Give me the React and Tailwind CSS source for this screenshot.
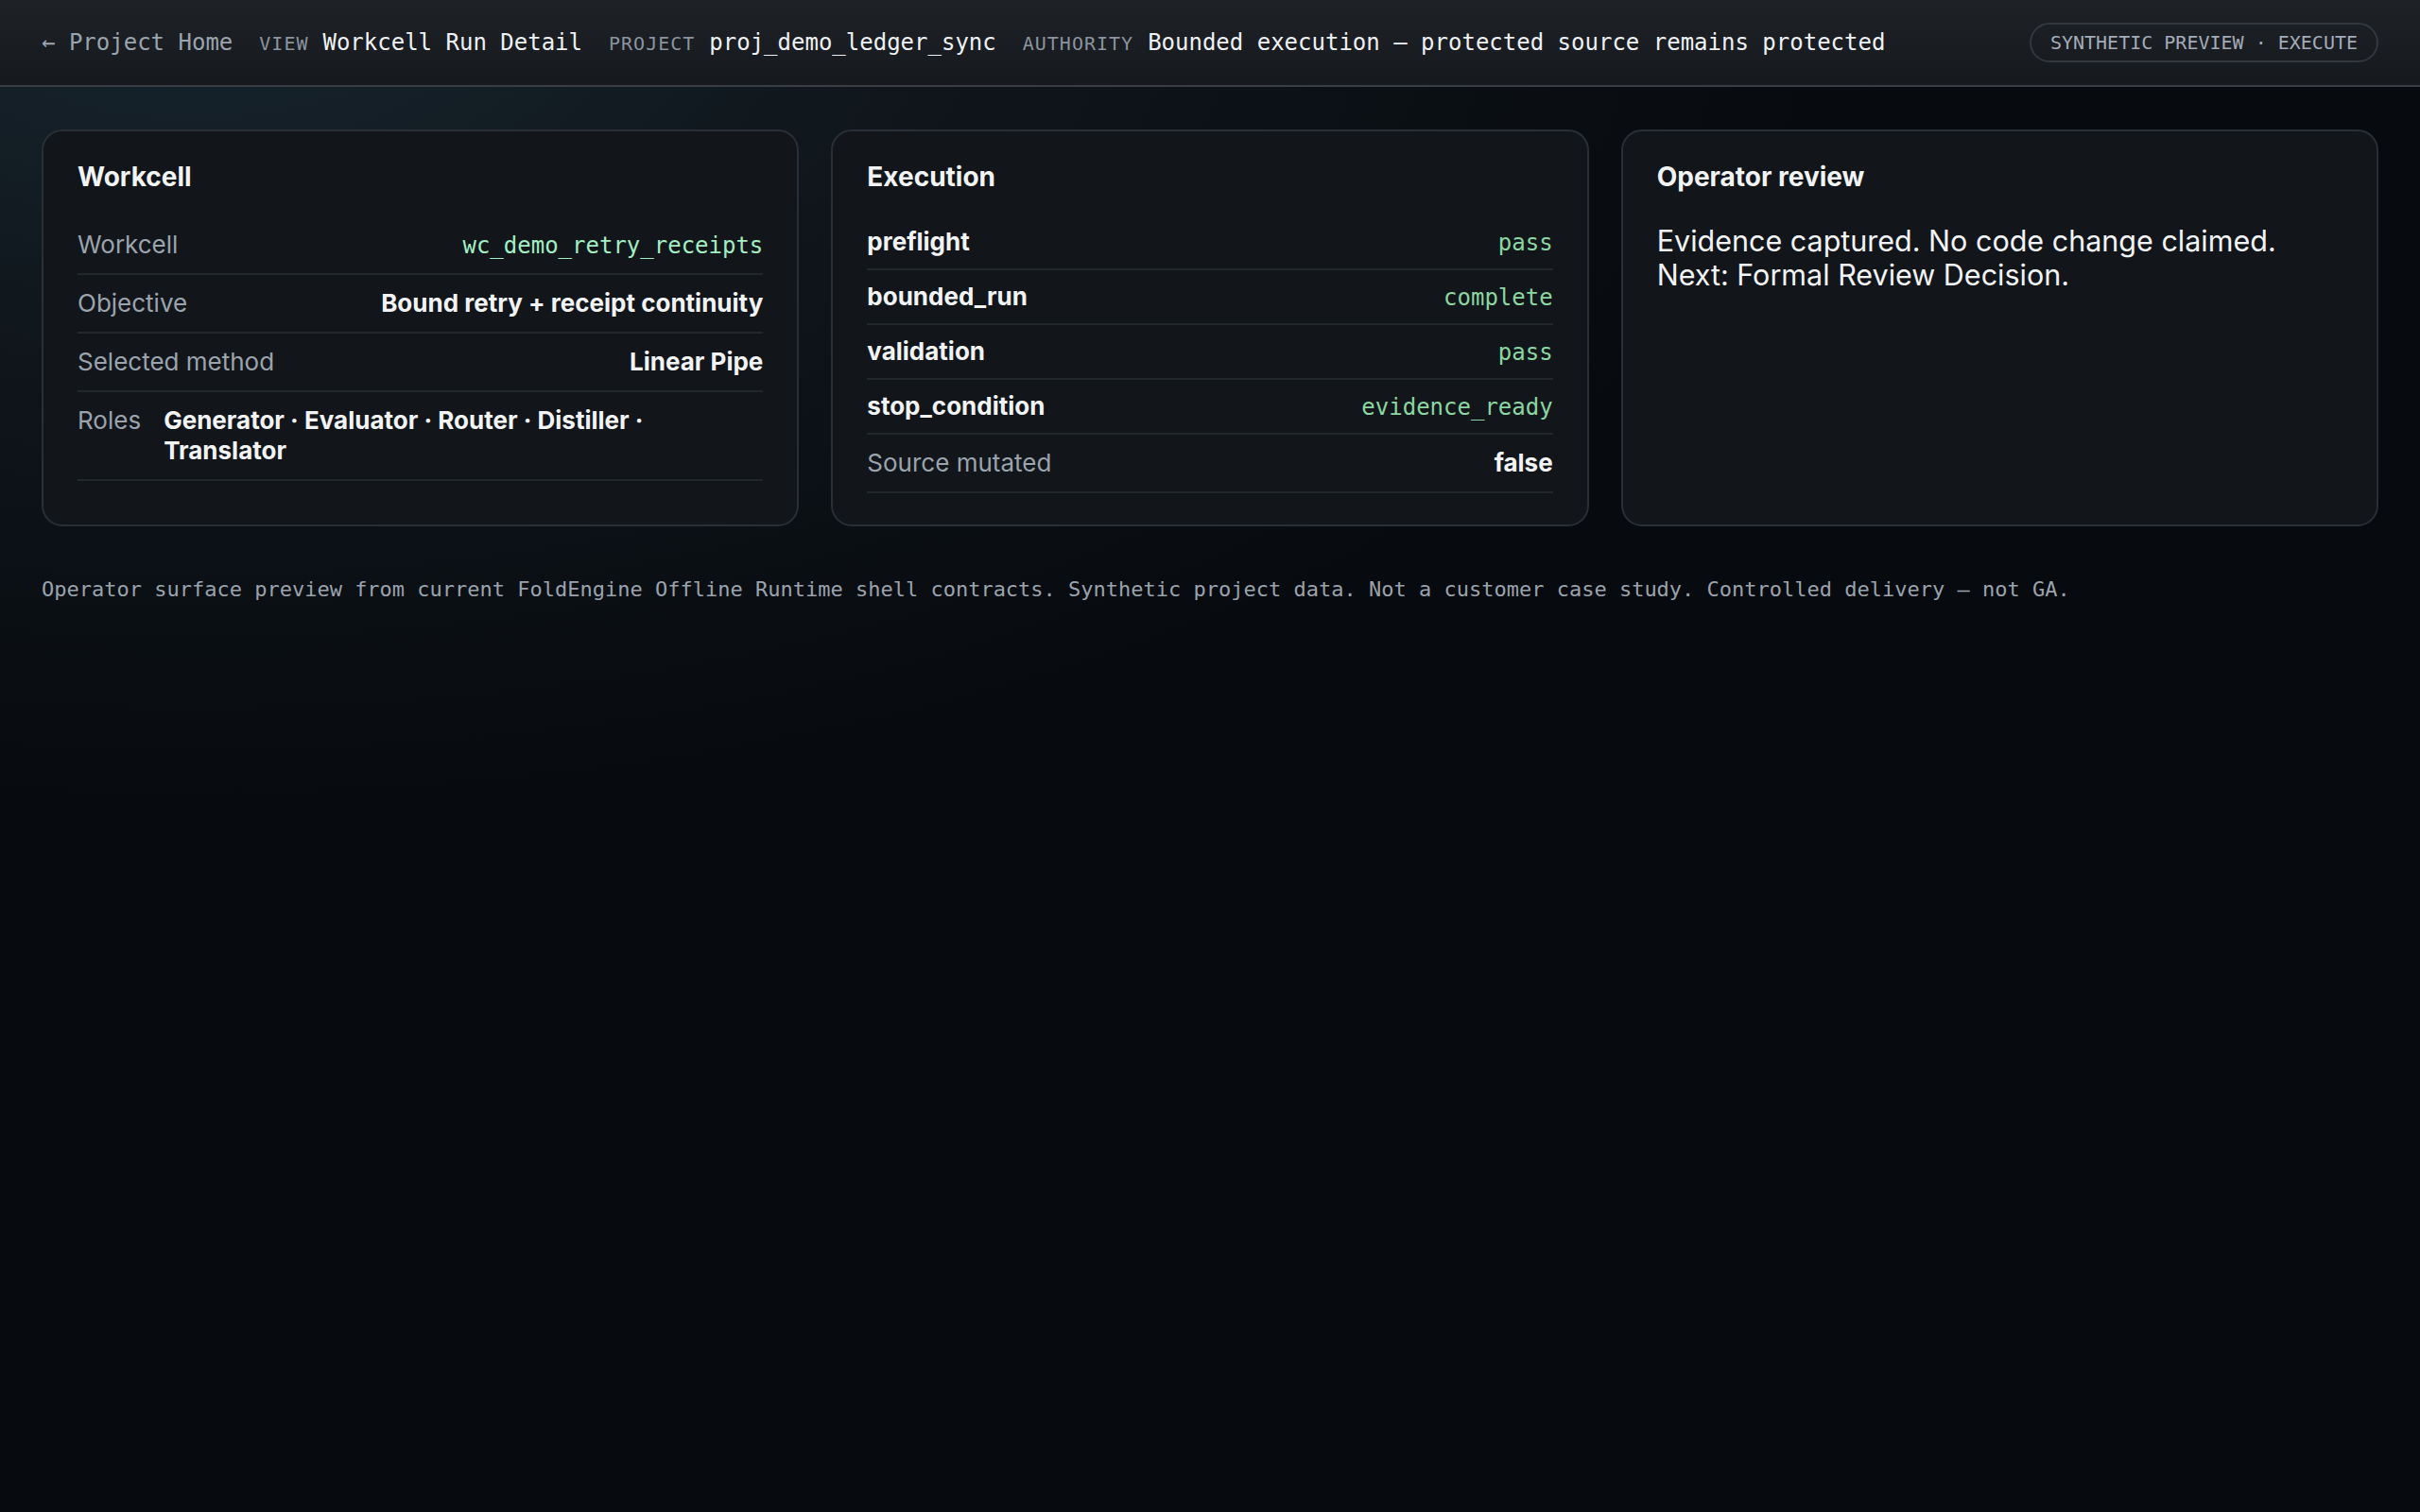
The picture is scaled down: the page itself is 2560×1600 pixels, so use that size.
import React from 'react'

const workcellRows = [
    { label: 'Workcell', value: 'wc_demo_retry_receipts', mono: true },
    { label: 'Objective', value: 'Bound retry + receipt continuity' },
    { label: 'Selected method', value: 'Linear Pipe' },
    { label: 'Roles', value: 'Generator · Evaluator · Router · Distiller · Translator' },
]

const steps = [
    { name: 'preflight', status: 'pass' },
    { name: 'bounded_run', status: 'complete' },
    { name: 'validation', status: 'pass' },
    { name: 'stop_condition', status: 'evidence_ready' },
]

const mono = "font-['DejaVu_Sans_Mono',monospace]"

const Card = ({ title, children }) => (
    <section className="rounded-[22px] border-2 border-[#2a2f35] bg-[#12161b] px-[36px] pt-[28px] pb-[33px]">
        <h2 className="text-[28px] leading-[40px] font-bold text-[#f1f3f5]">{title}</h2>
        {children}
    </section>
)

const Row = ({ label, value, valueMono }) => (
    <div className="flex items-baseline justify-between gap-[24px] border-b-2 border-[#22272c] py-[14px] text-[26px] leading-[32px]">
        <span className="shrink-0 text-[#9ba3ad]">{label}</span>
        {valueMono ? (
            <span className={`${mono} text-[24px] leading-[20px] text-[#a3eec4]`}>{value}</span>
        ) : (
            <span className="font-bold text-[#f1f3f5]">{value}</span>
        )}
    </div>
)

export default function App() {
    return (
        <div className="min-h-screen bg-[#070a0e] bg-[radial-gradient(ellipse_70%_55%_at_8%_0%,#17252e_0%,#0f151b_45%,#070a0e_100%)] font-['Inter',sans-serif]">
            {/* Top bar */}
            <header className={`${mono} flex h-[92px] items-center justify-between border-b-2 border-[#3a3e44] bg-[linear-gradient(180deg,#1e2227,#16191d)] px-[44px]`}>
                <div className="flex items-baseline gap-[28px] whitespace-nowrap">
                    <span className="text-[24px] text-[#9aa4af]">← Project Home</span>
                    <span className="flex items-baseline gap-[15px]">
                        <span className="text-[20px] tracking-[0.05em] text-[#8b949f]">VIEW</span>
                        <span className="text-[24px] text-[#eef1f4]">Workcell Run Detail</span>
                    </span>
                    <span className="flex items-baseline gap-[15px]">
                        <span className="text-[20px] tracking-[0.05em] text-[#8b949f]">PROJECT</span>
                        <span className="text-[24px] text-[#eef1f4]">proj_demo_ledger_sync</span>
                    </span>
                    <span className="flex items-baseline gap-[15px]">
                        <span className="text-[20px] tracking-[0.05em] text-[#8b949f]">AUTHORITY</span>
                        <span className="text-[24px] text-[#eef1f4]">Bounded execution — protected source remains protected</span>
                    </span>
                </div>
                <span className="rounded-full border-2 border-[#33383e] px-[20px] py-[6px] text-[20px] leading-[26px] text-[#a3acb8]">
                    SYNTHETIC PREVIEW · EXECUTE
                </span>
            </header>

            <main className="px-[44px] pt-[45px]">
                <div className="grid grid-cols-3 gap-[34px]">
                    <Card title="Workcell">
                        <div className="mt-[22px]">
                            {workcellRows.map(r => (
                                <Row key={r.label} label={r.label} value={r.value} valueMono={r.mono} />
                            ))}
                        </div>
                    </Card>

                    <Card title="Execution">
                        <div className="mt-[21px]">
                            {steps.map(s => (
                                <div key={s.name} className="flex items-baseline justify-between border-b-2 border-[#22272c] py-[12px] text-[26px] leading-[32px]">
                                    <span className="font-bold text-[#f1f3f5]">{s.name}</span>
                                    <span className={`${mono} text-[24px] leading-[20px] text-[#8bd6a2]`}>{s.status}</span>
                                </div>
                            ))}
                            <Row label="Source mutated" value="false" />
                        </div>
                    </Card>

                    <Card title="Operator review">
                        <div className="mt-[30px] text-[30.5px] leading-[36px] text-[#f1f3f5]">
                            <p>Evidence captured. No code change claimed.</p>
                            <p>Next: Formal Review Decision.</p>
                        </div>
                    </Card>
                </div>

                <p className={`${mono} mt-[50px] text-[22px] leading-[33px] text-[#9aa3ad]`}>
                    Operator surface preview from current FoldEngine Offline Runtime shell contracts. Synthetic project data. Not a customer case study. Controlled delivery — not GA.
                </p>
            </main>
        </div>
    )
}
